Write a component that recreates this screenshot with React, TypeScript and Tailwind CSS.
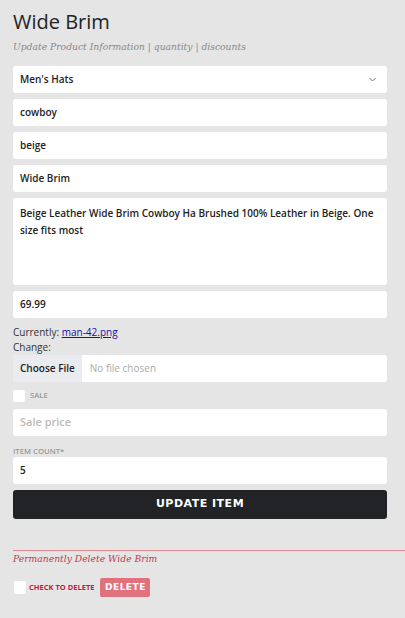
export default function App() {
  const field =
    "block h-[27px] w-full rounded-[3px] bg-white px-[7px] text-[10px] font-semibold text-[#222] outline-none";

  return (
    <div className="min-h-[618px] w-full bg-[#e5e5e5] font-['Open_Sans',sans-serif]">
      <div className="pt-[9px] pr-[18px] pl-[13px]">
        <h1 className="text-[20px] leading-[26px] font-medium text-[#222]">Wide Brim</h1>
        <p className="mt-[5px] font-['DejaVu_Serif',serif] text-[9.2px] leading-[14px] italic text-[#888]">
          Update Product Information | quantity | discounts
        </p>

        <div className="mt-[12px] flex flex-col gap-[6px]">
          <div className={`${field} flex items-center justify-between`}>
            <span>Men's Hats</span>
            <svg width="7" height="5" viewBox="0 0 7 5" className="mr-[4px]">
              <path d="M0.5 1l3 3 3-3" fill="none" stroke="#666" strokeWidth="0.9" />
            </svg>
          </div>
          <div className={`${field} flex items-center`}>cowboy</div>
          <div className={`${field} flex items-center`}>beige</div>
          <div className={`${field} flex items-center`}>Wide Brim</div>
          <div className="h-[87px] w-full rounded-[3px] bg-white px-[7px] pt-[7px] text-[10px] leading-[17px] font-semibold text-[#222]">
            Beige Leather Wide Brim Cowboy Ha Brushed 100% Leather in Beige. One size fits most
          </div>
          <div className={`${field} flex items-center`}>69.99</div>
        </div>

        <div className="mt-[7px] text-[10px] leading-[15px] text-[#333]">
          Currently: <span className="text-[#1a0dab] underline">man-42.png</span>
        </div>
        <div className="text-[10px] leading-[15px] text-[#333]">Change:</div>
        <div className="flex h-[27px] w-full overflow-hidden rounded-[3px] bg-white text-[10px]">
          <div className="flex items-center bg-[#e9ebee] px-[7px] font-semibold text-[#222]">Choose File</div>
          <div className="flex items-center px-[8px] text-[#aaa]">No file chosen</div>
        </div>

        <div className="mt-[8px] flex h-[12px] items-center gap-[5px]">
          <div className="h-[12px] w-[12px] rounded-[2px] bg-white" />
          <span className="text-[7.7px] font-semibold text-[#999]">SALE</span>
        </div>
        <div className={`${field} mt-[7px] flex items-center text-[11px] text-[#bbb]`}>Sale price</div>

        <div className="mt-[9px] text-[7.7px] leading-[12px] font-semibold text-[#999]">ITEM COUNT*</div>
        <div className={`${field} flex items-center`}>5</div>

        <button className="mt-[6px] flex h-[29px] w-full items-center justify-center rounded-[3px] bg-[#212327] font-['DejaVu_Sans',sans-serif] text-[11px] font-bold tracking-[0.5px] text-white">
          UPDATE ITEM
        </button>
      </div>

      <div className="mt-[31px] ml-[13px] border-t border-[#e0868f]" />
      <div className="px-[13px]">
        <p className="mt-[1px] font-['DejaVu_Serif',serif] text-[9.2px] leading-[14px] italic text-[#c0394f]">
          Permanently Delete Wide Brim
        </p>
        <div className="mt-[12px] flex items-center">
          <div className="ml-[1px] h-[13px] w-[12px] rounded-[2px] bg-white" />
          <span className="ml-[3px] text-[7.5px] font-bold text-[#c21a3c]">CHECK TO DELETE</span>
          <button className="ml-[6px] flex h-[19px] w-[50px] items-center justify-center rounded-[2px] bg-[#e2717e] font-['DejaVu_Sans',sans-serif] text-[9px] font-bold tracking-[0.5px] text-white">
            DELETE
          </button>
        </div>
      </div>
    </div>
  );
}
